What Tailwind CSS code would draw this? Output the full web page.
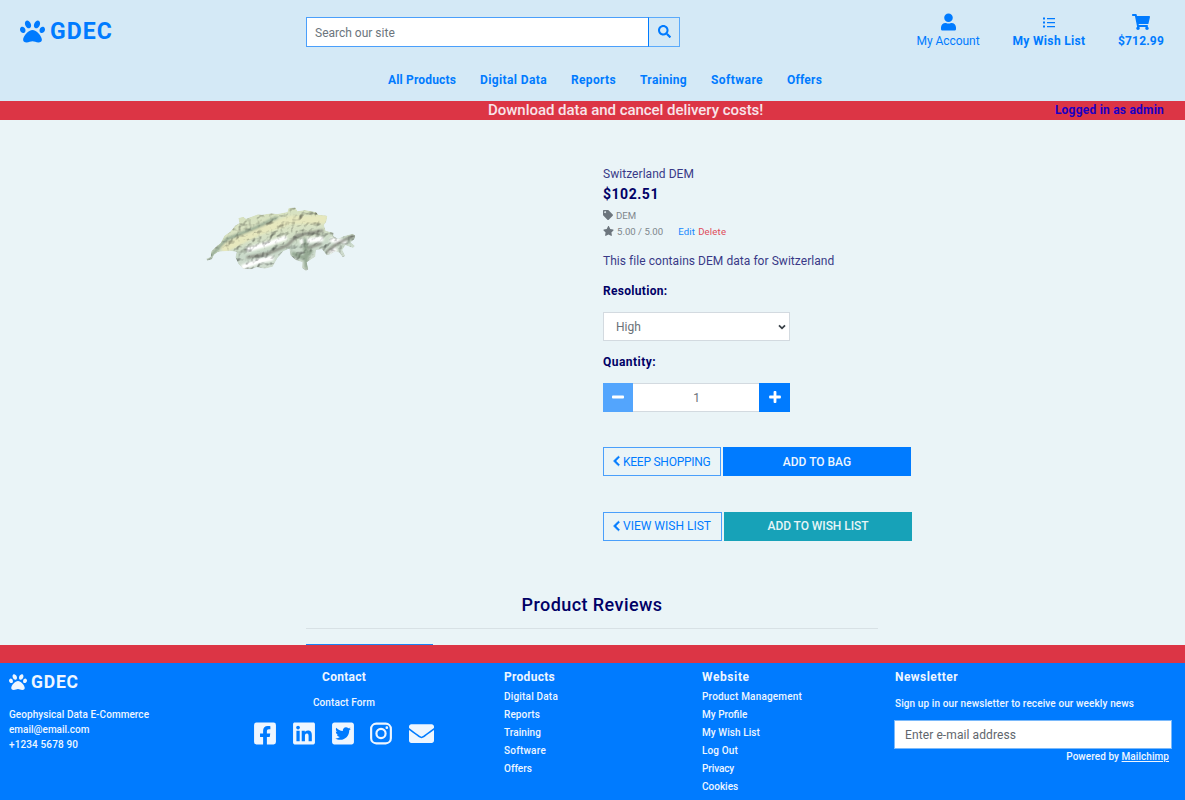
<!DOCTYPE html>
<html lang="en">
<head>
<meta charset="utf-8">
<title>GDEC - Switzerland DEM</title>
<script src="https://cdn.jsdelivr.net/npm/@tailwindcss/browser@4"></script>
</head>
<body class="flex h-[800px] flex-col overflow-hidden bg-[#eaf4f7] font-['Roboto',sans-serif] text-xs text-[#000066] whitespace-nowrap">
<svg class="hidden">
  <symbol id="paw" viewBox="0 0 512 512"><path d="M256 224c-79.41 0-192 122.76-192 200.25 0 34.9 26.81 55.75 71.74 55.75 48.84 0 81.09-25.08 120.26-25.08 39.51 0 71.85 25.08 120.26 25.08 44.93 0 71.74-20.85 71.74-55.75C448 346.76 335.41 224 256 224zm-147.28-12.61c-10.4-34.65-42.44-57.09-71.56-50.13-29.12 6.96-44.29 40.69-33.89 75.34 10.4 34.65 42.44 57.09 71.56 50.13 29.12-6.96 44.29-40.69 33.89-75.34zm84.72-20.78c30.94-8.14 42.92-49.79 26.76-93.03C204.03 54.34 165.85 25.88 134.91 34.02c-30.94 8.14-42.92 49.79-26.76 93.03 16.17 43.24 54.35 71.7 85.29 63.56zm281.39-29.35c-29.12-6.96-61.15 15.48-71.56 50.13-10.4 34.65 4.77 68.38 33.89 75.34 29.12 6.96 61.15-15.48 71.56-50.13 10.4-34.65-4.77-68.38-33.89-75.34zm-156.27 29.35c30.94 8.14 69.12-20.32 85.29-63.56 16.16-43.24 4.18-84.89-26.76-93.03-30.94-8.14-69.12 20.32-85.29 63.56-16.16 43.24-4.18 84.89 26.76 93.03z"/></symbol>
  <symbol id="chev" viewBox="0 0 320 512"><path d="M34.52 239.03L228.87 44.69c9.37-9.37 24.57-9.37 33.94 0l22.67 22.67c9.36 9.36 9.37 24.52.04 33.9L131.49 256l154.02 154.75c9.34 9.38 9.32 24.54-.04 33.9l-22.67 22.67c-9.37 9.37-24.57 9.37-33.94 0L34.52 272.97c-9.37-9.37-9.37-24.57 0-33.94z"/></symbol>
</svg>

<header class="flex h-[101px] shrink-0 flex-col bg-[#d4e9f6] text-[#007bff]">
  <div class="flex h-[62px]">
    <a class="flex w-[306px] items-center gap-[5px] pl-5">
      <svg class="h-[25px] w-[25px] fill-current"><use href="#paw"/></svg>
      <span class="pt-0.5 text-[23px] font-bold tracking-[1.1px]">GDEC</span>
    </a>
    <form class="mt-[17px] flex h-[30px] w-[374px]">
      <div class="flex w-[343px] items-center border border-[#4a9ffb] border-r-[#007bff] bg-white pt-px pl-2 text-[#6c757d]">Search our site</div>
      <div class="flex flex-1 items-center justify-center border border-l-0 border-[#5aaafb]">
        <svg class="mb-px h-[13px] w-[13px] fill-[#007bff]" viewBox="0 0 512 512"><path d="M505 442.7L405.3 343c-4.5-4.5-10.6-7-17-7H372c27.6-35.3 44-79.7 44-128C416 93.1 322.9 0 208 0S0 93.1 0 208s93.1 208 208 208c48.3 0 92.7-16.4 128-44v16.3c0 6.4 2.5 12.5 7 17l99.7 99.7c9.4 9.4 24.6 9.4 33.9 0l28.3-28.3c9.4-9.4 9.4-24.6.1-34zM208 336c-70.7 0-128-57.2-128-128 0-70.7 57.2-128 128-128 70.7 0 128 57.2 128 128 0 70.7-57.2 128-128 128z"/></svg>
      </div>
    </form>
    <div class="ml-auto flex pt-3 pr-[21px]">
      <a class="flex w-[64px] flex-col items-center">
        <svg class="h-5 w-[15px] fill-current" viewBox="0 0 448 512"><path d="M224 256c70.7 0 128-57.3 128-128S294.7 0 224 0 96 57.3 96 128s57.3 128 128 128zm89.6 32h-16.7c-22.2 10.2-46.9 16-72.9 16s-50.6-5.8-72.9-16h-16.7C60.2 288 0 348.2 0 422.4V464c0 26.5 21.5 48 48 48h352c26.5 0 48-21.5 48-48v-41.6c0-74.2-60.2-134.4-134.4-134.4z"/></svg>
        <span class="mt-px leading-4 tracking-[-.05px]">My Account</span>
      </a>
      <a class="ml-8 flex w-[74px] flex-col items-center font-bold">
        <svg class="h-5 w-3 fill-current" viewBox="0 0 12 20"><path d="M0 5.5h2v2H0zM0 9.5h2v2H0zM0 13.5h2v2H0zM4 6h8v1.2H4zM4 10h8v1.2H4zM4 14h8v1.2H4z"/></svg>
        <span class="mt-px leading-4 tracking-[.34px]">My Wish List</span>
      </a>
      <a class="ml-8 flex w-[46px] flex-col items-center font-bold">
        <svg class="h-5 w-[18px] fill-current" viewBox="0 0 576 512"><path d="M528.12 301.319l47.273-208C578.806 78.301 567.391 64 551.99 64H159.208l-9.166-44.81C147.758 8.021 137.93 0 126.529 0H24C10.745 0 0 10.745 0 24v16c0 13.255 10.745 24 24 24h69.883l70.248 343.435C147.325 417.1 136 435.222 136 456c0 30.928 25.072 56 56 56s56-25.072 56-56c0-15.674-6.447-29.835-16.824-40h209.647C430.447 426.165 424 440.326 424 456c0 30.928 25.072 56 56 56s56-25.072 56-56c0-22.172-12.888-41.332-31.579-50.405l5.517-24.276c3.413-15.018-8.002-29.319-23.403-29.319H218.117l-6.545-32h293.145c11.206 0 20.92-7.754 23.403-18.681z"/></svg>
        <span class="mt-px leading-4 tracking-[.17px]">$712.99</span>
      </a>
    </div>
  </div>
  <nav class="flex gap-6 pt-2.5 pl-[388px] font-bold">
    <a class="w-[68px] tracking-[.16px]">All Products</a>
    <a class="w-[67px] tracking-[.39px]">Digital Data</a>
    <a class="w-[45px] tracking-[.34px]">Reports</a>
    <a class="w-[47px] tracking-[.33px]">Training</a>
    <a class="w-[52px] tracking-[.44px]">Software</a>
    <a class="w-[35px] tracking-[.21px]">Offers</a>
  </nav>
</header>

<div class="flex h-[19px] shrink-0 items-center justify-between bg-[#dc3545] pr-[21px] pl-[488px]">
  <span class="text-[15px] leading-none font-medium tracking-[-.04px] text-[#f8e4ea]">Download data and cancel delivery costs!</span>
  <span class="pb-px font-bold tracking-[.22px] text-[#1a00c4]">Logged in as admin</span>
</div>

<main class="flex h-[525px] shrink-0 flex-col">
  <section class="flex h-[421px]">
    <div class="w-[603px] pt-[70px] pl-[190px]">
      <svg class="h-[95px] w-[190px]" viewBox="0 0 570 285">
        <defs>
          <linearGradient id="land" x1=".3" y1="0" x2=".62" y2="1">
            <stop offset="0" stop-color="#cddab8"/><stop offset=".42" stop-color="#d6dfbf"/><stop offset=".62" stop-color="#c6d6c6"/><stop offset="1" stop-color="#d2d8cf"/>
          </linearGradient>
          <filter id="relief" x="0" y="0" width="1" height="1" color-interpolation-filters="sRGB">
            <feTurbulence type="fractalNoise" baseFrequency=".04 .045" numOctaves="3" seed="8" result="n"/>
            <feDiffuseLighting in="n" surfaceScale="9" diffuseConstant="1.25" lighting-color="#fff" result="l"><feDistantLight azimuth="225" elevation="54"/></feDiffuseLighting>
            <feComposite in="SourceGraphic" in2="l" operator="arithmetic" k1=".6" k2=".42" result="m"/>
            <feComposite in="m" in2="SourceGraphic" operator="in"/>
          </filter>
          <filter id="soft"><feGaussianBlur stdDeviation="3"/></filter>
          <clipPath id="ch"><path d="M48 206L62 201L64 184L80 168L92 159L103 137L122 124L135 107L148 99L145 84L160 80L168 86L204 73L216 74L244 70L262 72L292 66L296 54L316 52L322 64L345 60L378 66L385 74L412 77L409 94L402 105L407 122L431 128L430 138L444 146L462 138L488 131L497 137L493 148L482 157L495 168L489 174L466 166L457 180L466 198L458 202L448 188L436 184L422 193L410 196L396 178L378 180L376 200L350 217L355 238L348 243L336 234L337 217L316 210L301 196L298 176L280 184L262 205L248 230L224 236L200 232L184 238L160 237L145 222L136 202L140 186L120 182L98 184L84 186L72 194L66 208L52 212Z"/></clipPath>
        </defs>
        <g filter="url(#relief)"><g clip-path="url(#ch)">
          <path d="M0 0H570V285H0z" fill="url(#land)"/>
          <g filter="url(#soft)" fill="none">
            <path d="M95 180L200 125L300 90L410 88" stroke="#e2e3ba" stroke-width="26"/>
            <path d="M60 200L110 148L200 112L262 82" stroke="#93a690" stroke-width="9"/>
            <path d="M155 232L210 212L250 204M170 180L240 160L290 142M330 155L400 146M420 150L470 155M415 185L440 180" stroke="#fff" stroke-width="14"/>
            <path d="M170 203L236 190L292 166L322 136L400 122M408 188L440 162L492 136M340 178L395 160" stroke="#85887e" stroke-width="8"/>
            <path d="M305 190L345 205L365 180M345 145L350 235" stroke="#92a590" stroke-width="13"/>
          </g>
        </g></g>
      </svg>
    </div>

    <div class="flex flex-col items-start pt-[44px]">
      <p class="leading-5 tracking-[.05px] text-[#393a87]">Switzerland DEM</p>
      <p class="text-sm leading-5 font-bold tracking-[.53px]">$102.51</p>
      <p class="mt-1 flex h-[15px] items-center gap-[3px] text-[9.6px] text-[#7e868c]">
        <svg class="mb-px h-2.5 w-2.5 fill-[#6c757d]" viewBox="0 0 512 512"><path d="M0 252.118V48C0 21.49 21.49 0 48 0h204.118a48 48 0 0 1 33.941 14.059l211.882 211.882c18.745 18.745 18.745 49.137 0 67.882L293.823 497.941c-18.745 18.745-49.137 18.745-67.882 0L14.059 286.059A48 48 0 0 1 0 252.118zM112 64c-26.51 0-48 21.49-48 48s21.49 48 48 48 48-21.49 48-48-21.49-48-48-48z"/></svg><span class="pt-px">DEM</span></p>
      <p class="mt-px flex h-[15px] items-center text-[9.6px] text-[#7e868c]">
        <svg class="mr-[3px] mb-px h-2.5 w-[11px] fill-[#6c757d]" viewBox="0 0 576 512"><path d="M259.3 17.8L194 150.2 47.9 171.5c-26.2 3.8-36.7 36.1-17.7 54.6l105.7 103-25 145.5c-4.5 26.3 23.2 46 46.4 33.7L288 439.6l130.7 68.7c23.2 12.2 50.9-7.4 46.4-33.7l-25-145.5 105.7-103c19-18.5 8.5-50.8-17.7-54.6L382 150.2 316.7 17.8c-11.7-23.6-45.6-23.9-57.4 0z"/></svg>
        <span class="pt-px">5.00 / 5.00</span><a class="ml-[15px] pt-px tracking-[.19px] text-[#1687fd]">Edit</a><a class="ml-[3px] pt-px tracking-[.16px] text-[#df4b5a]">Delete</a></p>
      <p class="mt-3 leading-5 tracking-[.05px] text-[#393a87]">This file contains DEM data for Switzerland</p>
      <p class="mt-2.5 leading-5 font-bold tracking-[.3px]">Resolution:</p>
      <div class="mt-[11px] flex h-[29px] w-[187px] items-center justify-between border border-[#d3dae0] bg-white pr-[3px] pl-3 text-[#6a7178]">High
        <svg class="h-2 w-2 fill-none stroke-[#394047] stroke-[1.8]" viewBox="0 0 8 8"><path d="M1 2.3L4 5.3L7 2.3"/></svg>
      </div>
      <p class="mt-[11px] leading-5 font-bold tracking-[.46px]">Quantity:</p>
      <div class="mt-[11px] flex h-[29px] w-[187px]">
        <div class="flex w-[30px] items-center justify-center bg-[#53a5fd]"><svg class="mb-px h-3 w-3 fill-white" viewBox="0 0 12 12"><rect y="4.6" width="12" height="2.8" rx=".9"/></svg></div>
        <div class="flex flex-1 items-center justify-center border-y border-[#d3dae0] bg-white pl-px text-[#6a7178]">1</div>
        <div class="flex w-[31px] items-center justify-center bg-[#007bff]"><svg class="mb-px h-3 w-3 fill-white" viewBox="0 0 12 12"><path d="M1 4.6h3.6V1a.9.9 0 0 1 .9-.9h1a.9.9 0 0 1 .9.9v3.6H11a.9.9 0 0 1 .9.9v1a.9.9 0 0 1-.9.9H7.4V11a.9.9 0 0 1-.9.9h-1a.9.9 0 0 1-.9-.9V7.4H1a.9.9 0 0 1-.9-.9v-1a.9.9 0 0 1 .9-.9z"/></svg></div>
      </div>
      <div class="mt-[35px] flex h-[29px] gap-[2px] text-[#007bff]">
        <a class="flex w-[118px] items-center border border-[#4a9ffb] pl-[9px]"><svg class="mr-[3px] mb-px h-3 w-[7px] fill-current stroke-current stroke-[24]"><use href="#chev"/></svg><span class="tracking-[-.25px]">KEEP SHOPPING</span></a>
        <a class="flex w-[188px] items-center justify-center bg-[#007bff] font-medium text-[#edf5fe]">ADD TO BAG</a>
      </div>
      <div class="mt-9 flex h-[29px] gap-[2px] text-[#007bff]">
        <a class="flex w-[119px] items-center border border-[#4a9ffb] pb-0.5 pl-[9px]"><svg class="mr-[3px] h-3 w-[7px] fill-current stroke-current stroke-[24]"><use href="#chev"/></svg><span>VIEW WISH LIST</span></a>
        <a class="flex w-[188px] items-center justify-center bg-[#17a2b8] pb-0.5 font-medium tracking-[-.06px] text-[#e6f5f7]">ADD TO WISH LIST</a>
      </div>
    </div>
  </section>
  <section class="ml-[306px] flex w-[572px] flex-col pt-[51px]">
    <h2 class="text-center text-lg leading-[26px] font-medium tracking-[.43px]">Product Reviews</h2>
    <hr class="mt-2.5 border-[#d8e1e5]">
    <div class="mt-[15px] h-px w-[127px] bg-[#1a83f5]"></div>
  </section>
</main>

<div class="h-[18px] shrink-0 bg-[#dc3545]"></div>
<footer class="flex flex-1 bg-[#007bff] text-[10px] font-medium text-[#eef6ff]">
  <div class="w-[245px] pt-2 pl-[9px]">
    <div class="flex h-[22px] items-center gap-1"><svg class="h-[18px] w-[18px] fill-current"><use href="#paw"/></svg><span class="pt-0.5 text-[17.5px] font-bold tracking-[.8px]">GDEC</span></div>
    <div class="mt-3.5 leading-[15px]">
      <p class="tracking-[.06px]">Geophysical Data E-Commerce</p>
      <p>email@email.com</p>
      <p class="tracking-[.13px]">+1234 5678 90</p>
    </div>
  </div>
  <div class="flex w-[198px] flex-col items-center pt-1.5">
    <h3 class="text-xs leading-4 font-bold tracking-[.26px]">Contact</h3>
    <a class="mt-2.5 leading-[15px] tracking-[.1px]">Contact Form</a>
    <div class="mt-[11px] flex items-center gap-[16.7px]">
      <svg class="h-[25px] w-[22px] fill-current" viewBox="0 0 448 512"><path d="M400 32H48A48 48 0 0 0 0 80v352a48 48 0 0 0 48 48h137.25V327.69h-63V256h63v-54.64c0-62.15 37-96.48 93.67-96.48 27.14 0 55.52 4.84 55.52 4.84v61h-31.27c-30.81 0-40.42 19.12-40.42 38.73V256h68.78l-11 71.69h-57.78V480H400a48 48 0 0 0 48-48V80a48 48 0 0 0-48-48z"/></svg>
      <svg class="h-[25px] w-[22px] fill-current" viewBox="0 0 448 512"><path d="M416 32H31.9C14.3 32 0 46.5 0 64.3v383.4C0 465.5 14.3 480 31.9 480H416c17.6 0 32-14.5 32-32.3V64.3c0-17.8-14.4-32.3-32-32.3zM135.4 416H69V202.2h66.5V416zm-33.2-243c-21.3 0-38.5-17.3-38.5-38.5S80.9 96 102.2 96c21.2 0 38.5 17.3 38.5 38.5 0 21.3-17.2 38.5-38.5 38.5zm282.1 243h-66.4V312c0-24.8-.5-56.7-34.5-56.7-34.6 0-39.9 27-39.9 54.9V416h-66.4V202.2h63.7v29.2h.9c8.9-16.8 30.6-34.5 62.9-34.5 67.2 0 79.7 44.3 79.7 101.9V416z"/></svg>
      <svg class="h-[25px] w-[22px] fill-current" viewBox="0 0 448 512"><path d="M400 32H48C21.5 32 0 53.5 0 80v352c0 26.5 21.5 48 48 48h352c26.5 0 48-21.5 48-48V80c0-26.5-21.5-48-48-48zm-48.9 158.8c.2 2.8.2 5.7.2 8.5 0 86.7-66 186.6-186.6 186.6-37.2 0-71.7-10.8-100.7-29.4 5.3.6 10.4.8 15.8.8 30.7 0 58.9-10.4 81.4-28-28.8-.6-53-19.5-61.3-45.5 10.1 1.5 19.2 1.5 29.6-1.2-30-6.1-52.5-32.5-52.5-64.4v-.8c8.7 4.9 18.9 7.9 29.6 8.3a65.447 65.447 0 0 1-29.2-54.6c0-12.2 3.2-23.4 8.9-33.1 32.3 39.8 80.8 65.8 135.2 68.6-9.3-44.5 24-80.6 64-80.6 18.9 0 35.9 7.9 47.9 20.7 14.8-2.8 29-8.3 41.6-15.8-4.9 15.2-15.2 28-28.8 36.1 13.2-1.4 26-5.1 37.8-10.2-8.9 13.1-20.1 24.7-32.9 34z"/></svg>
      <svg class="h-[25px] w-[22px] fill-none stroke-current stroke-[44]" viewBox="0 0 448 512"><rect x="22" y="54" width="404" height="404" rx="105"/><circle cx="224" cy="256" r="94"/><circle cx="343" cy="137" r="27" class="fill-current stroke-none"/></svg>
      <svg class="h-[25px] w-[25px] fill-current" viewBox="0 0 512 512"><path d="M502.3 190.8c3.9-3.1 9.7-.2 9.7 4.7V400c0 26.5-21.5 48-48 48H48c-26.5 0-48-21.5-48-48V195.6c0-5 5.7-7.8 9.7-4.7 22.4 17.4 52.1 39.5 154.1 113.6 21.1 15.4 56.7 47.8 92.2 47.6 35.7.3 72-32.8 92.3-47.6 102-74.1 131.6-96.3 154-113.7zM256 320c23.2.4 56.6-29.2 73.4-41.4 132.7-96.3 142.8-104.7 173.4-128.7 5.8-4.5 9.2-11.5 9.2-18.9v-19c0-26.5-21.5-48-48-48H48c-26.5 0-48 21.5-48 48v19c0 7.4 3.4 14.3 9.2 18.9 30.6 23.9 40.7 32.4 173.4 128.7 16.8 12.2 50.2 41.8 73.4 41.4z"/></svg>
    </div>
  </div>
  <div class="w-[259px] pt-1.5 pl-[61px] leading-[18px]">
    <h3 class="mb-[3px] text-xs leading-4 font-bold tracking-[.29px]">Products</h3>
    <p class="tracking-[.19px]">Digital Data</p><p class="tracking-[.11px]">Reports</p><p class="tracking-[.07px]">Training</p><p class="tracking-[.22px]">Software</p><p>Offers</p>
  </div>
  <div class="w-[193px] pt-1.5 leading-[18px]">
    <h3 class="mb-[3px] text-xs leading-4 font-bold tracking-[.6px]">Website</h3>
    <p class="tracking-[.18px]">Product Management</p><p>My Profile</p><p class="tracking-[.07px]">My Wish List</p><p class="tracking-[.14px]">Log Out</p><p class="tracking-[-.1px]">Privacy</p><p>Cookies</p>
  </div>
  <div class="w-[277px] pt-1.5">
    <h3 class="text-xs leading-4 font-bold tracking-[.44px]">Newsletter</h3>
    <p class="mt-[11px] leading-[15px] tracking-[.11px]">Sign up in our newsletter to receive our weekly news</p>
    <div class="mt-[9px] -ml-px flex h-[29px] w-[278px] items-center border border-[#7ab9fb] bg-white pl-2.5 text-xs font-normal tracking-[.1px] text-[#5f666d]">Enter e-mail address</div>
    <p class="pr-[3px] text-right leading-[15px] tracking-[.06px]">Powered by <span class="underline">Mailchimp</span></p>
  </div>
</footer>
</body>
</html>
